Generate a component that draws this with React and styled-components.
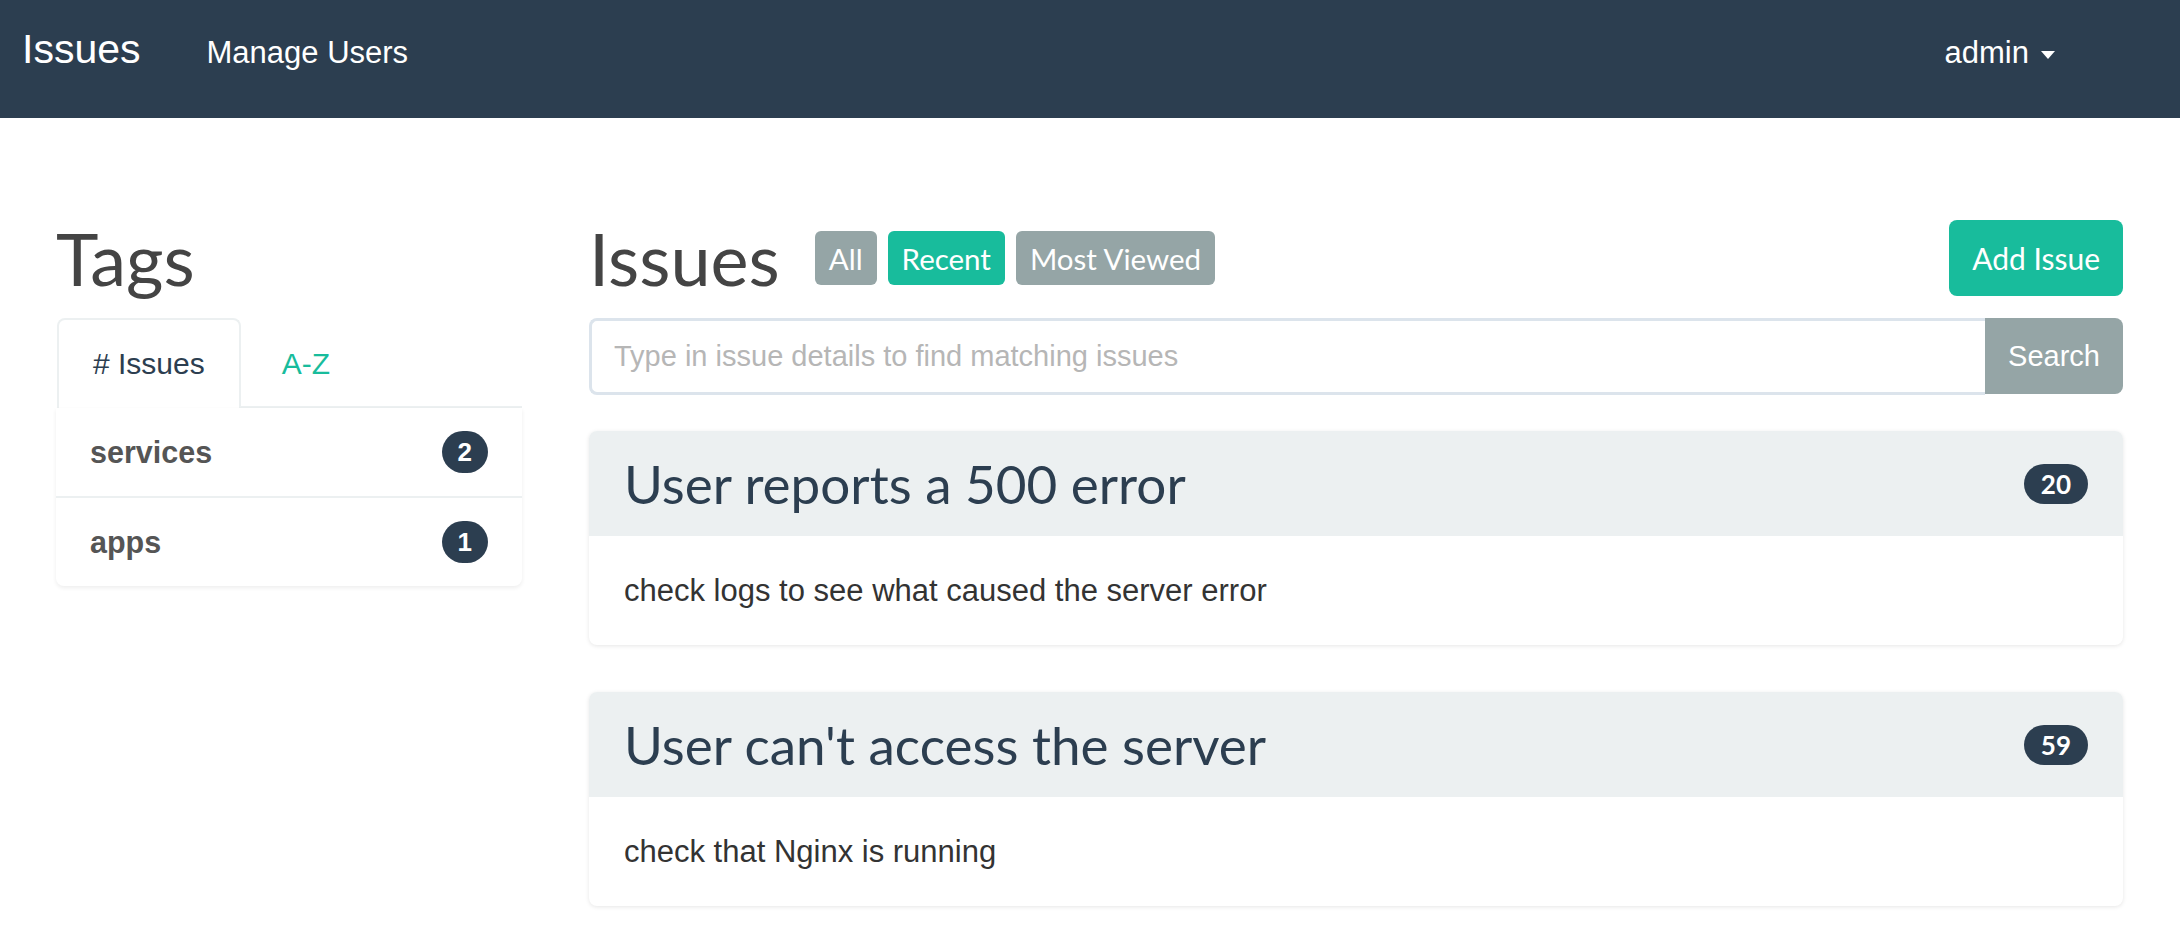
import styled, { createGlobalStyle } from 'styled-components';

const GlobalStyle = createGlobalStyle`
    body {
        margin: 0;
        background: #ffffff;
        font-family: "Liberation Sans", Arial, sans-serif;
        color: #333333;
    }
    * {
        box-sizing: border-box;
    }
`;

const Navbar = styled.nav`
    height: 118px;
    background: #2c3e50;
    display: flex;
    align-items: baseline;
    padding: 29px 125px 0 22px;
`;

const Brand = styled.a`
    font-size: 41px;
    line-height: 40px;
    color: #ffffff;
    text-decoration: none;
    margin-right: 66px;
`;

const NavLink = styled.a`
    font-size: 31px;
    line-height: 40px;
    color: #ffffff;
    text-decoration: none;
    margin-left: ${(p) => (p.$push ? 'auto' : '0')};
    display: flex;
    align-items: center;
`;

const Caret = styled.span`
    display: inline-block;
    width: 0;
    height: 0;
    margin-left: 12px;
    margin-top: 4px;
    border-top: 8px solid #ffffff;
    border-left: 7.5px solid transparent;
    border-right: 7.5px solid transparent;
`;

const Page = styled.main`
    display: grid;
    grid-template-columns: 466px 1fr;
    column-gap: 67px;
    padding: 102px 57px 40px 56px;
`;

const Column = styled.section`
    display: flex;
    flex-direction: column;
`;

const TitleRow = styled.div`
    height: 76px;
    display: flex;
    align-items: center;
    justify-content: space-between;
    margin-bottom: ${(p) => p.$gap}px;
`;

const Heading = styled.h1`
    margin: 0;
    font-family: Lato, sans-serif;
    font-weight: 400;
    font-size: 72px;
    line-height: 76px;
    color: #444444;
`;

const HeadingGroup = styled.div`
    display: flex;
    align-items: center;
`;

const FilterGroup = styled.div`
    display: flex;
    align-items: center;
    gap: 11px;
    margin-left: 35px;
`;

const FilterButton = styled.button`
    height: 54px;
    padding: 0 14px;
    border: none;
    border-radius: 6px;
    background: ${(p) => (p.$active ? '#18bc9c' : '#95a5a6')};
    color: #ffffff;
    font-family: Lato, sans-serif;
    font-size: 29.5px;
    font-weight: 400;
    cursor: pointer;
`;

const PrimaryButton = styled.button`
    height: 76px;
    padding: 0 23px;
    border: none;
    border-radius: 8px;
    background: #18bc9c;
    color: #ffffff;
    font-family: Lato, sans-serif;
    font-size: 30px;
    font-weight: 400;
    cursor: pointer;
`;

const Tabs = styled.ul`
    list-style: none;
    margin: 0 0 0 1px;
    padding: 0;
    display: flex;
    gap: 5px;
    height: 90px;
    border-bottom: 2px solid #ecf0f1;
`;

const Tab = styled.li`
    height: 90px;
    padding: 0 34px;
    display: flex;
    align-items: center;
    font-size: 30px;
    color: ${(p) => (p.$active ? '#2c3e50' : '#18bc9c')};
    border: 2px solid ${(p) => (p.$active ? '#ecf0f1' : 'transparent')};
    border-bottom: none;
    border-radius: 8px 8px 0 0;
    background: ${(p) => (p.$active ? '#ffffff' : 'transparent')};
    margin-bottom: ${(p) => (p.$active ? '-2px' : '0')};
    cursor: pointer;
`;

const TagList = styled.ul`
    list-style: none;
    margin: 0;
    padding: 0;
    border-radius: 0 0 8px 8px;
    box-shadow: 0 2px 4px rgba(0, 0, 0, 0.07);
`;

const TagRow = styled.li`
    height: ${(p) => (p.$last ? 88 : 90)}px;
    padding: 0 34px;
    display: flex;
    align-items: center;
    justify-content: space-between;
    border-bottom: ${(p) => (p.$last ? 'none' : '2px solid #ecf0f1')};
    font-size: 30.5px;
    font-weight: 700;
    color: #555555;
`;

const Badge = styled.span`
    display: inline-flex;
    align-items: center;
    justify-content: center;
    height: ${(p) => p.$h}px;
    padding: 0 ${(p) => p.$px}px;
    border-radius: 21px;
    background: #2c3e50;
    color: #ffffff;
    font-family: ${(p) => (p.$lato ? 'Lato, sans-serif' : '"Liberation Sans", Arial, sans-serif')};
    font-size: 26px;
    font-weight: 700;
`;

const SearchGroup = styled.form`
    display: flex;
    height: 77px;
    margin-bottom: 36px;
`;

const SearchInput = styled.input`
    flex: 1;
    height: 77px;
    padding: 0 22px;
    border: 3px solid #dce4ec;
    border-right: none;
    border-radius: 8px 0 0 8px;
    font-family: "Liberation Sans", Arial, sans-serif;
    font-size: 29px;
    color: #2c3e50;
    outline: none;
    &::placeholder {
        color: #b6b6b6;
    }
`;

const SearchButton = styled.button`
    width: 138px;
    height: 76px;
    border: none;
    border-radius: 0 8px 8px 0;
    background: #95a5a6;
    color: #ffffff;
    font-family: "Liberation Sans", Arial, sans-serif;
    font-size: 29px;
    cursor: pointer;
`;

const IssueCard = styled.article`
    border-radius: 8px;
    overflow: hidden;
    background: #ffffff;
    box-shadow: 0 1px 4px rgba(0, 0, 0, 0.1);
    margin-bottom: 47px;
`;

const CardHeader = styled.header`
    height: 105px;
    padding: 0 35px;
    background: #ecf0f1;
    display: flex;
    align-items: center;
    justify-content: space-between;
`;

const CardTitle = styled.h3`
    margin: 0;
    font-family: Lato, sans-serif;
    font-weight: 400;
    font-size: 53px;
    line-height: 60px;
    color: #2c3e50;
`;

const CardBody = styled.div`
    height: 109px;
    padding: 0 35px;
    display: flex;
    align-items: center;
    font-size: 31px;
    color: #333333;
`;

const tags = [
    { name: 'services', count: 2 },
    { name: 'apps', count: 1 },
];

const issues = [
    { title: 'User reports a 500 error', body: 'check logs to see what caused the server error', views: 20 },
    { title: "User can't access the server", body: 'check that Nginx is running', views: 59 },
];

export default function App() {
    return (
        <>
            <GlobalStyle />
            <Navbar>
                <Brand href="#">Issues</Brand>
                <NavLink href="#">Manage Users</NavLink>
                <NavLink href="#" $push>
                    admin
                    <Caret />
                </NavLink>
            </Navbar>
            <Page>
                <Column>
                    <TitleRow $gap={22}>
                        <Heading>Tags</Heading>
                    </TitleRow>
                    <Tabs>
                        <Tab $active># Issues</Tab>
                        <Tab>A-Z</Tab>
                    </Tabs>
                    <TagList>
                        {tags.map((tag, i) => (
                            <TagRow key={tag.name} $last={i === tags.length - 1}>
                                {tag.name}
                                <Badge $h={42} $px={16}>{tag.count}</Badge>
                            </TagRow>
                        ))}
                    </TagList>
                </Column>
                <Column>
                    <TitleRow $gap={22}>
                        <HeadingGroup>
                            <Heading>Issues</Heading>
                            <FilterGroup>
                                <FilterButton>All</FilterButton>
                                <FilterButton $active>Recent</FilterButton>
                                <FilterButton>Most Viewed</FilterButton>
                            </FilterGroup>
                        </HeadingGroup>
                        <PrimaryButton>Add Issue</PrimaryButton>
                    </TitleRow>
                    <SearchGroup onSubmit={(e) => e.preventDefault()}>
                        <SearchInput placeholder="Type in issue details to find matching issues" />
                        <SearchButton type="submit">Search</SearchButton>
                    </SearchGroup>
                    {issues.map((issue) => (
                        <IssueCard key={issue.title}>
                            <CardHeader>
                                <CardTitle>{issue.title}</CardTitle>
                                <Badge $h={40} $px={17} $lato>{issue.views}</Badge>
                            </CardHeader>
                            <CardBody>{issue.body}</CardBody>
                        </IssueCard>
                    ))}
                </Column>
            </Page>
        </>
    );
}
